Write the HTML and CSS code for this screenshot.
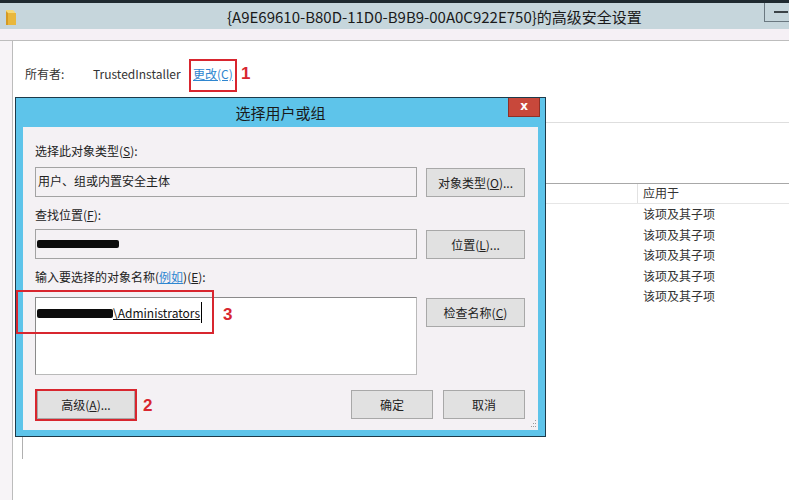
FILE: index.html
```html
<!DOCTYPE html>
<html lang="zh-CN">
<head>
    <meta charset="UTF-8">
    <title>高级安全设置</title>
    <link rel="stylesheet" href="styles.css">
</head>
<body>
    <div class="screen">
        <div class="topline"></div>
        <div class="titlebar">
            <svg class="folder" width="12" height="17" viewBox="0 0 12 17">
                <path d="M1 1 H8 L10 3 V16 H1 Z" fill="#f6d978"/>
                <path d="M3 4 H11 V16 H3 Z" fill="#e9b73c"/>
                <path d="M3 4 L1 2 V16 H3 Z" fill="#d59a22"/>
            </svg>
            <span class="title-text">{A9E69610-B80D-11D0-B9B9-00A0C922E750}的高级安全设置</span>
            <span class="min-btn"><span class="dash"></span></span>
        </div>
        <div class="band"></div>

        <div class="main">
            <div class="owner">
                <span class="owner-label">所有者:</span>
                <span class="owner-name">TrustedInstaller</span>
                <span class="link">更改(C)</span>
            </div>
            <div class="tabline"></div>
            <div class="perm-table">
                <div class="perm-head">
                    <span class="col-spacer"></span>
                    <span class="col-apply">应用于</span>
                </div>
                <div class="perm-row">该项及其子项</div>
                <div class="perm-row">该项及其子项</div>
                <div class="perm-row">该项及其子项</div>
                <div class="perm-row">该项及其子项</div>
                <div class="perm-row">该项及其子项</div>
            </div>
        </div>

        <div class="dialog">
            <div class="dlg-title">
                <span></span>
                <span class="dlg-title-text">选择用户或组</span>
                <span class="close-btn">x</span>
            </div>
            <div class="client">
                <div class="label">选择此对象类型(<u>S</u>):</div>
                <div class="field-row">
                    <div class="textbox">用户、组或内置安全主体</div>
                    <div class="btn side-btn">对象类型(<u>O</u>)...</div>
                </div>
                <div class="label label-gap">查找位置(<u>F</u>):</div>
                <div class="field-row row-tight">
                    <div class="textbox"><span class="redact redact-loc"></span></div>
                    <div class="btn side-btn">位置(<u>L</u>)...</div>
                </div>
                <div class="label label-gap">输入要选择的对象名称(<span class="link">例如</span>)(<u>E</u>):</div>
                <div class="field-row row-names">
                    <div class="textarea">
                        <span class="typed"><span class="redact redact-name"></span>\Administrators</span><span class="caret"></span>
                    </div>
                    <div class="btn side-btn">检查名称(<u>C</u>)</div>
                </div>
                <div class="actions">
                    <div class="btn btn-adv">高级(<u>A</u>)...</div>
                    <div class="btn btn-ok">确定</div>
                    <div class="btn btn-ok">取消</div>
                </div>
                <svg class="grip" width="6" height="8" viewBox="0 0 6 8">
                    <rect x="4" y="0" width="1" height="1" fill="#9a9a9a"/>
                    <rect x="2" y="3" width="1" height="1" fill="#9a9a9a"/>
                    <rect x="4" y="3" width="1" height="1" fill="#9a9a9a"/>
                    <rect x="0" y="6" width="1" height="1" fill="#9a9a9a"/>
                    <rect x="2" y="6" width="1" height="1" fill="#9a9a9a"/>
                    <rect x="4" y="6" width="1" height="1" fill="#9a9a9a"/>
                </svg>
            </div>
        </div>

        <div class="mark mark1"></div>
        <span class="mark-num num1">1</span>
        <div class="mark mark2"></div>
        <span class="mark-num num2">2</span>
        <div class="mark mark3"></div>
        <span class="mark-num num3">3</span>
    </div>
</body>
</html>
```

FILE: styles.css
```css
body {
    margin: 0;
    font-family: "Noto Sans CJK SC", "Noto Sans", sans-serif;
    font-size: 12px;
    color: #1e1e1e;
}

.screen {
    position: relative;
    width: 789px;
    height: 500px;
    overflow: hidden;
    background-color: #f7f4f7;
}

.topline {
    height: 3px;
    background-color: #1f2a30;
}

.titlebar {
    display: flex;
    align-items: center;
    height: 26px;
    background-color: #c6d6dc;
}

.folder {
    margin: 2px 0 0 5px;
}

.title-text {
    margin-left: 210px;
    font-size: 15px;
    color: #1a1a1a;
    white-space: nowrap;
}

.min-btn {
    align-self: flex-start;
    margin-left: auto;
    width: 24px;
    height: 18px;
    flex: 0 0 24px;
    border: 1px solid #6a7880;
    border-top: none;
    border-right: none;
    display: flex;
    align-items: center;
}

.min-btn .dash {
    margin-left: 9px;
    width: 14px;
    height: 2px;
    background-color: #3b4347;
}

.band {
    height: 11px;
    background-color: #f5f0f5;
    border-bottom: 1px solid #bdbdbd;
}

.main {
    margin-left: 12px;
    height: 459px;
    background-color: #fff;
    border-left: 1px solid #bcbcbc;
}

.owner {
    display: flex;
    padding: 25px 0 0 12px;
    line-height: 16px;
    color: #333;
}

.owner-label {
    width: 68px;
}

.owner-name {
    width: 100px;
}

.link {
    color: #2f86d0;
    text-decoration: underline;
}

.tabline {
    margin: 40px 0 0 9px;
    height: 1px;
    background-color: #dedede;
}

.perm-table {
    margin: 60px 0 0 9px;
    border-top: 1px solid #a8a8a8;
    border-left: 1px solid #b0b0b0;
    height: 275px;
}

.perm-head {
    display: flex;
    height: 19px;
    line-height: 18px;
    border-bottom: 1px solid #e6e6e6;
}

.col-spacer {
    width: 614px;
    border-right: 1px solid #e2e2e2;
}

.col-apply {
    padding-left: 5px;
    color: #333;
}

.perm-row {
    padding-left: 620px;
    line-height: 20.5px;
    color: #333;
}

/* dialog on top */
.dialog {
    position: absolute;
    left: 15px;
    top: 97px;
    width: 531px;
    height: 340px;
    box-sizing: border-box;
    border: 1px solid #1d3a4a;
    background-color: #5ec4ea;
    display: flex;
    flex-direction: column;
}

.dlg-title {
    display: grid;
    grid-template-columns: 1fr auto 1fr;
    height: 29px;
}

.dlg-title-text {
    font-size: 15px;
    line-height: 30px;
    color: #1a1a1a;
}

.close-btn {
    justify-self: end;
    margin-right: 5px;
    width: 32px;
    height: 19px;
    box-sizing: border-box;
    background-color: #c8483b;
    border: 1px solid #8f3027;
    border-top: none;
    color: #fff;
    font-family: "DejaVu Sans", sans-serif;
    font-weight: bold;
    font-size: 12px;
    line-height: 16px;
    text-align: center;
}

.client {
    position: relative;
    flex: 1;
    margin: 0 7px 6px 7px;
    padding: 16px 13px 0 12px;
    background-color: #f4f1f4;
}

.label {
    line-height: 16px;
    color: #222;
}

.label-gap {
    margin-top: 10px;
}

.field-row {
    display: flex;
    gap: 9px;
    margin-top: 8px;
}

.row-tight {
    margin-top: 6px;
}

.row-names {
    margin-top: 12px;
}

.textbox {
    width: 382px;
    height: 30px;
    box-sizing: border-box;
    border: 1px solid #a3a3a3;
    padding: 0 2px;
    line-height: 26px;
    color: #222;
}

.textarea {
    width: 382px;
    height: 78px;
    box-sizing: border-box;
    border: 1px solid #b9b9b9;
    border-top-color: #8a8a8a;
    border-left-color: #8a8a8a;
    background-color: #fff;
    padding: 6px 0 0 1px;
    display: flex;
    align-items: flex-start;
}

.typed {
    display: flex;
    align-items: center;
    font-size: 12px;
    line-height: 18px;
    text-decoration: underline;
    color: #111;
}

.caret {
    width: 1px;
    height: 21px;
    margin: -2px 0 0 1px;
    background-color: #000;
}

.redact {
    display: inline-block;
    background-color: #0c0c0c;
    border-radius: 2px;
}

.redact-loc {
    width: 82px;
    height: 8px;
    margin: 6px 0 0 -1px;
}

.redact-name {
    width: 76px;
    height: 9px;
}

.btn {
    height: 29px;
    box-sizing: border-box;
    border: 1px solid #a8a8a8;
    background-color: #e1e1e1;
    text-align: center;
    line-height: 27px;
    color: #222;
}

.side-btn {
    width: 99px;
    margin-top: 1px;
}

.actions {
    display: flex;
    gap: 10px;
    margin-top: 15px;
}

.btn-adv {
    width: 98px;
    margin-left: 2px;
    margin-right: auto;
}

.btn-ok {
    width: 82px;
}

.grip {
    position: absolute;
    right: 1px;
    bottom: 2px;
}

/* annotations */
.mark {
    position: absolute;
    box-sizing: border-box;
    border: 2px solid #d8262f;
}

.mark1 {
    left: 189px;
    top: 59px;
    width: 48px;
    height: 33px;
}

.mark2 {
    left: 35px;
    top: 389px;
    width: 102px;
    height: 32px;
}

.mark3 {
    left: 16px;
    top: 290px;
    width: 198px;
    height: 44px;
}

.mark-num {
    position: absolute;
    font-family: "Liberation Sans", sans-serif;
    font-weight: bold;
    font-size: 17px;
    line-height: 20px;
    color: #d8262f;
}

.num1 {
    left: 241px;
    top: 64px;
}

.num2 {
    left: 143px;
    top: 396px;
}

.num3 {
    left: 223px;
    top: 305px;
}
```
